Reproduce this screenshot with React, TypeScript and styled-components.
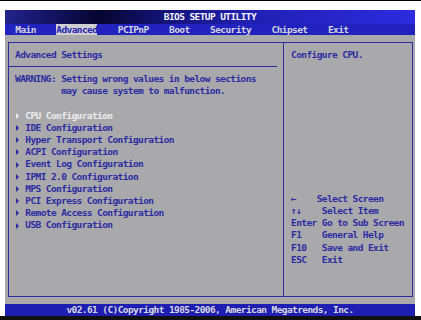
import { createGlobalStyle, styled } from 'styled-components';

const CH = 5.125;
const ROW = 12.2;

const GlobalStyle = createGlobalStyle`
  html, body {
    margin: 0;
    background: #ffffff;
  }
`;

const menus = ['Main', 'Advanced', 'PCIPnP', 'Boot', 'Security', 'Chipset', 'Exit'];

const items = [
  'CPU Configuration',
  'IDE Configuration',
  'Hyper Transport Configuration',
  'ACPI Configuration',
  'Event Log Configuration',
  'IPMI 2.0 Configuration',
  'MPS Configuration',
  'PCI Express Configuration',
  'Remote Access Configuration',
  'USB Configuration',
];

const keys: { key: string; desc: string; keyCols: number }[] = [
  { key: '←', desc: 'Select Screen', keyCols: 5 },
  { key: '↑↓', desc: 'Select Item', keyCols: 6 },
  { key: 'Enter', desc: 'Go to Sub Screen', keyCols: 6 },
  { key: 'F1', desc: 'General Help', keyCols: 6 },
  { key: 'F10', desc: 'Save and Exit', keyCols: 6 },
  { key: 'ESC', desc: 'Exit', keyCols: 6 },
];

export default function App() {
  return (
    <>
      <GlobalStyle />
      <Frame>
        <Screen>
          <TitleBar>BIOS SETUP UTILITY</TitleBar>
          <MenuBar>
            {menus.map((m) => (
              <MenuItem key={m} $active={m === 'Advanced'}>
                {m}
              </MenuItem>
            ))}
          </MenuBar>
          <Body>
            <Panel>
              <LeftPane>
                <Line>Advanced Settings</Line>
                <Rule />
                <Line>WARNING: Setting wrong values in below sections</Line>
                <Line $indent={9}>may cause system to malfunction.</Line>
                <Blank />
                {items.map((it, i) => (
                  <ItemRow key={it} $selected={i === 0}>
                    <Arrow />
                    {it}
                  </ItemRow>
                ))}
              </LeftPane>
              <RightPane>
                <Line>Configure CPU.</Line>
                <KeyList>
                  {keys.map((k) => (
                    <KeyRow key={k.key}>
                      <KeyName $cols={k.keyCols}>{k.key}</KeyName>
                      {k.desc}
                    </KeyRow>
                  ))}
                </KeyList>
              </RightPane>
            </Panel>
          </Body>
          <Footer>v02.61 (C)Copyright 1985-2006, American Megatrends, Inc.</Footer>
        </Screen>
      </Frame>
    </>
  );
}

const Frame = styled.div`
  width: 421px;
  height: 320px;
  box-sizing: border-box;
  border-top: 1px solid #000;
  border-bottom: 4px solid #111;
  padding: 9px 6px 0 5px;
  background: #fff;
  font-family: 'DejaVu Sans Mono', 'Liberation Mono', monospace;
  font-size: 9.5px;
  font-weight: bold;
  letter-spacing: ${CH - 9.5 * 0.602}px;
`;

const Screen = styled.div`
  height: 306px;
  display: flex;
  flex-direction: column;
  background: #a9a8ab;
`;

const TitleBar = styled.div`
  height: 14px;
  line-height: 14px;
  text-align: center;
  color: #f4f4f4;
  background: linear-gradient(90deg, #23238a 0%, #121260 12%, #060630 23%, #14147e 40%, #2020b4 60%, #2c2ce0 100%);
`;

const MenuBar = styled.div`
  height: 11px;
  display: flex;
  gap: ${4 * CH}px;
  padding-left: ${2 * CH}px;
  background: #2222be;
`;

const MenuItem = styled.span<{ $active?: boolean }>`
  line-height: 11px;
  color: ${(p) => (p.$active ? '#2424b0' : '#d4d4dc')};
  background: ${(p) => (p.$active ? '#cfcfd2' : 'transparent')};
`;

const Body = styled.div`
  flex: 1;
  display: flex;
  padding: 7px 2px 7px 3px;
`;

const Panel = styled.div`
  flex: 1;
  display: flex;
  border: 1px solid #2c2c9c;
`;

const LeftPane = styled.div`
  width: 275px;
  box-sizing: border-box;
  border-right: 1px solid #2c2c9c;
  padding: 6px 7px 0 6px;
  color: #2c2ca2;
`;

const RightPane = styled.div`
  flex: 1;
  display: flex;
  flex-direction: column;
  justify-content: space-between;
  padding: 6px 6px 30px 7px;
  color: #2c2ca2;
`;

const Line = styled.div<{ $indent?: number }>`
  height: ${ROW}px;
  line-height: ${ROW}px;
  white-space: pre;
  padding-left: ${(p) => (p.$indent ?? 0) * CH}px;
`;

const Blank = styled.div`
  height: ${ROW}px;
`;

const Rule = styled.div`
  height: 1px;
  width: 268px;
  margin: 4.8px 0 6.2px -6px;
  background: #2c2c9c;
`;

const ItemRow = styled.div<{ $selected?: boolean }>`
  height: ${ROW}px;
  line-height: ${ROW}px;
  display: flex;
  align-items: center;
  white-space: pre;
  color: ${(p) => (p.$selected ? '#ececf0' : '#2c2ca2')};
`;

const Arrow = styled.span`
  width: 0;
  height: 0;
  margin: 0 ${2 * CH - 4}px 0 1px;
  border-left: 3px solid currentColor;
  border-top: 3px solid transparent;
  border-bottom: 3px solid transparent;
`;

const KeyList = styled.div`
  display: flex;
  flex-direction: column;
`;

const KeyRow = styled.div`
  height: ${ROW}px;
  line-height: ${ROW}px;
  display: flex;
  white-space: pre;
`;

const KeyName = styled.span<{ $cols: number }>`
  width: ${(p) => p.$cols * CH}px;
  flex: none;
`;

const Footer = styled.div`
  height: 12px;
  line-height: 12px;
  text-align: center;
  color: #d8d8dc;
  background: #1e1eb2;
`;
